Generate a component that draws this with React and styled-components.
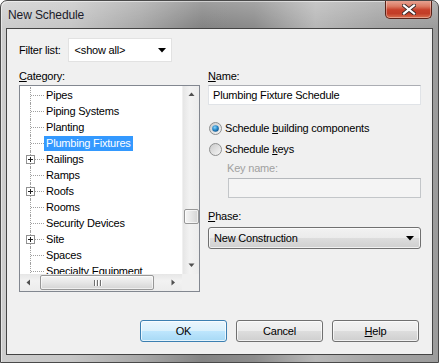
import React from 'react';
import styled, { createGlobalStyle } from 'styled-components';

const Global = createGlobalStyle`
  html, body { margin: 0; padding: 0; background: #fff; }
  body {
    width: 439px; height: 363px; overflow: hidden;
    font-family: "Segoe UI", "Liberation Sans", Arial, sans-serif;
    font-size: 11px; letter-spacing: -0.2px; color: #000;
  }
  * { box-sizing: border-box; }
`;

const Window = styled.div`
  width: 439px; height: 363px;
  display: flex; flex-direction: column;
  border: 1px solid #4a4a4a;
  border-radius: 7px 7px 0 0;
  overflow: hidden;
  background:
    linear-gradient(to bottom, rgba(255,255,255,0.22) 0px, rgba(255,255,255,0) 26px),
    linear-gradient(to right, #cdcdcd 0%, #c6c6c6 16%, #a8a8a8 32%, #848484 46%, #8c8c8c 58%, #b8b8b8 72%, #a4a4a4 86%, #9c9c9c 100%);
  box-shadow: inset 1px 1px 0 rgba(255,255,255,0.5);
`;

const TitleBar = styled.div`
  height: 27px; flex: none;
  display: flex; align-items: flex-start; justify-content: space-between;
  padding-left: 7px;
`;

const Title = styled.div`
  padding-top: 7px; line-height: 15px; font-size: 12px; color: #1b1b2a;
  letter-spacing: -0.1px;
`;

const CloseButton = styled.div`
  width: 47px; height: 19px; margin-top: -1px; margin-right: 6px;
  border: 1px solid #5a2318; border-top: none;
  border-radius: 0 0 5px 5px;
  display: flex; align-items: center; justify-content: center;
  background: linear-gradient(to bottom, #e9a99a 0%, #dc7a63 35%, #c7402a 55%, #c23d27 75%, #d9714f 100%);
  box-shadow: inset 0 0 0 1px rgba(255,255,255,0.35);
`;

const Client = styled.div`
  flex: 1;
  margin: 0 5px 7px 5px;
  border: 1px solid #444;
  background: #f0f0f0;
  display: flex; flex-direction: column;
  padding: 9px 11px 12px 12px;
`;

const FilterRow = styled.div`
  display: flex; align-items: center; gap: 7px; height: 24px;
`;

const Label = styled.div`
  line-height: 15px; height: 15px; color: ${p => (p.$disabled ? '#a0a0a0' : '#000')};
  white-space: nowrap;
  padding-left: ${p => p.$indent || 0}px;
  margin-top: ${p => p.$mt || 0}px;
`;

const U = styled.span`text-decoration: underline; text-underline-offset: 1px;`;

const PlainSelect = styled.div`
  width: 104px; height: 24px;
  background: #fff; border: 1px solid #e2e2e2;
  display: flex; align-items: center; justify-content: space-between;
  padding: 0 5px 0 6px;
`;

const Main = styled.div`
  display: grid; grid-template-columns: 181px 213px; column-gap: 8px;
  margin-top: 7px;
`;

const Column = styled.div`display: flex; flex-direction: column;`;

const TreeBox = styled.div`
  margin-top: 1px;
  height: 207px;
  border: 1px solid #828790;
  background: #fff;
  display: grid;
  grid-template-columns: 1fr 17px;
  grid-template-rows: 1fr 17px;
  overflow: hidden;
`;

const TreeItems = styled.div`
  overflow: hidden; padding-top: 1px;
`;

const TreeRow = styled.div`
  height: 16px; display: flex; align-items: center;
`;

const Gutter = styled.div`
  position: relative; width: 24px; height: 16px; flex: none;
  &::before {
    content: ''; position: absolute; left: 10px; top: 0; bottom: 0;
    border-left: 1px dotted #a0a0a0;
  }
  &::after {
    content: ''; position: absolute; left: 11px; top: 8px; width: 13px;
    border-top: 1px dotted #a0a0a0;
  }
`;

const Expander = styled.svg`
  position: absolute; left: 6px; top: 4px; z-index: 1;
`;

const ItemText = styled.span`
  line-height: 15px; padding: 0 2px; white-space: nowrap;
  background: ${p => (p.$selected ? '#3399ff' : 'transparent')};
  color: ${p => (p.$selected ? '#fff' : '#000')};
`;

const VScroll = styled.div`
  display: flex; flex-direction: column;
  background: linear-gradient(to right, #e6e6e6, #f2f2f2 40%, #ececec);
  border-left: 1px solid #f0f0f0;
`;

const HScroll = styled.div`
  display: flex;
  background: linear-gradient(to bottom, #e6e6e6, #f2f2f2 40%, #ececec);
`;

const ArrowBtn = styled.div`
  flex: none; width: 17px; height: 17px;
  display: flex; align-items: center; justify-content: center;
`;

const VTrack = styled.div`
  flex: 1; padding-top: ${p => p.$offset}px; padding-left: 1px;
`;

const HTrack = styled.div`
  flex: 1; padding-left: ${p => p.$offset}px; padding-top: 1px;
`;

const VThumb = styled.div`
  width: 15px; height: 15px;
  border: 1px solid #979797; border-radius: 2px;
  background: linear-gradient(to right, #f5f5f5, #e6e6e6 50%, #d4d4d4);
  box-shadow: inset 0 0 0 1px rgba(255,255,255,0.6);
`;

const HThumb = styled.div`
  width: ${p => p.$size}px; height: 15px;
  border: 1px solid #979797; border-radius: 2px;
  background: linear-gradient(to bottom, #f5f5f5, #e6e6e6 50%, #d4d4d4);
  box-shadow: inset 0 0 0 1px rgba(255,255,255,0.6);
  display: flex; align-items: center; justify-content: center; gap: 2px;
`;

const Grip = styled.span`
  width: 1px; height: 6px; background: #6f6f6f;
  box-shadow: 1px 0 0 #fff;
`;

const Corner = styled.div`background: #f0f0f0;`;

const TextInput = styled.div`
  height: ${p => p.$h || 20}px;
  margin-top: ${p => p.$mt || 1}px;
  margin-left: ${p => p.$ml || 0}px;
  border: 1px solid ${p => (p.$disabled ? '#c3c6c9' : '#e0e3e7')};
  border-top-color: ${p => (p.$disabled ? '#b5b8bc' : '#abadb3')};
  background: ${p => (p.$disabled ? '#f4f4f4' : '#fff')};
  display: flex; align-items: center; padding-left: 4px;
  white-space: nowrap;
`;

const RadioRow = styled.label`
  display: flex; align-items: center; gap: 3px; height: 15px; line-height: 15px;
  margin-top: ${p => p.$mt}px; padding-left: 1px;
`;

const ComboButton = styled.div`
  margin-top: 3px; height: 22px;
  border: 1px solid #707070; border-radius: 3px;
  background: linear-gradient(to bottom, #f2f2f2 0%, #ebebeb 50%, #dddddd 51%, #cfcfcf 100%);
  box-shadow: inset 0 0 0 1px rgba(255,255,255,0.7);
  display: flex; align-items: center; justify-content: space-between;
  padding: 0 6px 0 5px;
`;

const ButtonRow = styled.div`
  margin-top: auto;
  display: flex; justify-content: flex-end; gap: 9px;
  padding-right: 2px;
`;

const Button = styled.div`
  width: 87px; height: 22px;
  border: 1px solid ${p => (p.$default ? '#3c7fb1' : '#707070')};
  border-radius: 3px;
  background: ${p =>
    p.$default
      ? 'linear-gradient(to bottom, #eaf6fd 0%, #d9f0fc 50%, #bee6fd 51%, #a7d9f5 100%)'
      : 'linear-gradient(to bottom, #f2f2f2 0%, #ebebeb 50%, #dddddd 51%, #cfcfcf 100%)'};
  box-shadow: inset 0 0 0 1px rgba(255,255,255,0.7);
  display: flex; align-items: center; justify-content: center;
`;

const DownArrow = () => (
  <svg width="8" height="5" viewBox="0 0 8 5">
    <path d="M0 0 H8 L4 4.5 Z" fill="#000" />
  </svg>
);

const ScrollArrow = ({ dir }) => {
  const paths = {
    up: 'M0.5 4 L3.5 0.5 L6.5 4 Z',
    down: 'M0.5 0.5 L3.5 4 L6.5 0.5 Z',
    left: 'M4 0.5 L0.5 3.5 L4 6.5 Z',
    right: 'M0.5 0.5 L4 3.5 L0.5 6.5 Z',
  };
  const vertical = dir === 'up' || dir === 'down';
  return (
    <svg width={vertical ? 7 : 5} height={vertical ? 5 : 7} viewBox={vertical ? '0 0 7 5' : '0 0 5 7'}>
      <path d={paths[dir]} fill="#505050" />
    </svg>
  );
};

const Radio = ({ checked }) => (
  <svg width="13" height="13" viewBox="0 0 13 13">
    <defs>
      <linearGradient id="rbg" x1="0" y1="0" x2="1" y2="1">
        <stop offset="0" stopColor="#c8c8c8" />
        <stop offset="1" stopColor="#f8f8f8" />
      </linearGradient>
      <radialGradient id="rdot" cx="0.4" cy="0.35" r="0.7">
        <stop offset="0" stopColor="#8fd4f7" />
        <stop offset="0.5" stopColor="#2d8fd0" />
        <stop offset="1" stopColor="#0d4f86" />
      </radialGradient>
    </defs>
    <circle cx="6.5" cy="6.5" r="6" fill="url(#rbg)" stroke="#8e8f8f" />
    {checked && <circle cx="6.5" cy="6.5" r="3.3" fill="url(#rdot)" />}
  </svg>
);

const PlusBox = () => (
  <Expander width="9" height="9" viewBox="0 0 9 9">
    <rect x="0.5" y="0.5" width="8" height="8" fill="#fff" stroke="#919191" />
    <path d="M2 4.5 H7 M4.5 2 V7" stroke="#1e1e1e" strokeWidth="1" />
  </Expander>
);

const categories = [
  { label: 'Pipes' },
  { label: 'Piping Systems' },
  { label: 'Planting' },
  { label: 'Plumbing Fixtures', selected: true },
  { label: 'Railings', expandable: true },
  { label: 'Ramps' },
  { label: 'Roofs', expandable: true },
  { label: 'Rooms' },
  { label: 'Security Devices' },
  { label: 'Site', expandable: true },
  { label: 'Spaces' },
  { label: 'Specialty Equipment' },
];

export default function App() {
  return (
    <>
      <Global />
      <Window>
        <TitleBar>
          <Title>New Schedule</Title>
          <CloseButton>
            <svg width="14" height="11" viewBox="0 0 14 11">
              <path d="M2 1.5 L12 9.5 M12 1.5 L2 9.5" stroke="#3b2a28" strokeWidth="4" strokeLinecap="square" />
              <path d="M2 1.5 L12 9.5 M12 1.5 L2 9.5" stroke="#ffffff" strokeWidth="2.2" strokeLinecap="square" />
            </svg>
          </CloseButton>
        </TitleBar>
        <Client>
          <FilterRow>
            <Label>Filter list:</Label>
            <PlainSelect>
              <span>&lt;show all&gt;</span>
              <DownArrow />
            </PlainSelect>
          </FilterRow>
          <Main>
            <Column>
              <Label><U>C</U>ategory:</Label>
              <TreeBox>
                <TreeItems>
                  {categories.map(c => (
                    <TreeRow key={c.label}>
                      <Gutter>{c.expandable && <PlusBox />}</Gutter>
                      <ItemText $selected={c.selected}>{c.label}</ItemText>
                    </TreeRow>
                  ))}
                </TreeItems>
                <VScroll>
                  <ArrowBtn><ScrollArrow dir="up" /></ArrowBtn>
                  <VTrack $offset={106}><VThumb /></VTrack>
                  <ArrowBtn><ScrollArrow dir="down" /></ArrowBtn>
                </VScroll>
                <HScroll>
                  <ArrowBtn><ScrollArrow dir="left" /></ArrowBtn>
                  <HTrack $offset={3}>
                    <HThumb $size={114}><Grip /><Grip /><Grip /></HThumb>
                  </HTrack>
                  <ArrowBtn><ScrollArrow dir="right" /></ArrowBtn>
                </HScroll>
                <Corner />
              </TreeBox>
            </Column>
            <Column>
              <Label><U>N</U>ame:</Label>
              <TextInput>Plumbing Fixture Schedule</TextInput>
              <RadioRow $mt={16}>
                <Radio checked />
                <span>Schedule <U>b</U>uilding components</span>
              </RadioRow>
              <RadioRow $mt={6}>
                <Radio />
                <span>Schedule <U>k</U>eys</span>
              </RadioRow>
              <Label $disabled $indent={19} $mt={4}>Key name:</Label>
              <TextInput $disabled $ml={20} $mt={2} />
              <Label $mt={11}><U>P</U>hase:</Label>
              <ComboButton>
                <span>New Construction</span>
                <DownArrow />
              </ComboButton>
            </Column>
          </Main>
          <ButtonRow>
            <Button $default>OK</Button>
            <Button>Cancel</Button>
            <Button><span><U>H</U>elp</span></Button>
          </ButtonRow>
        </Client>
      </Window>
    </>
  );
}
